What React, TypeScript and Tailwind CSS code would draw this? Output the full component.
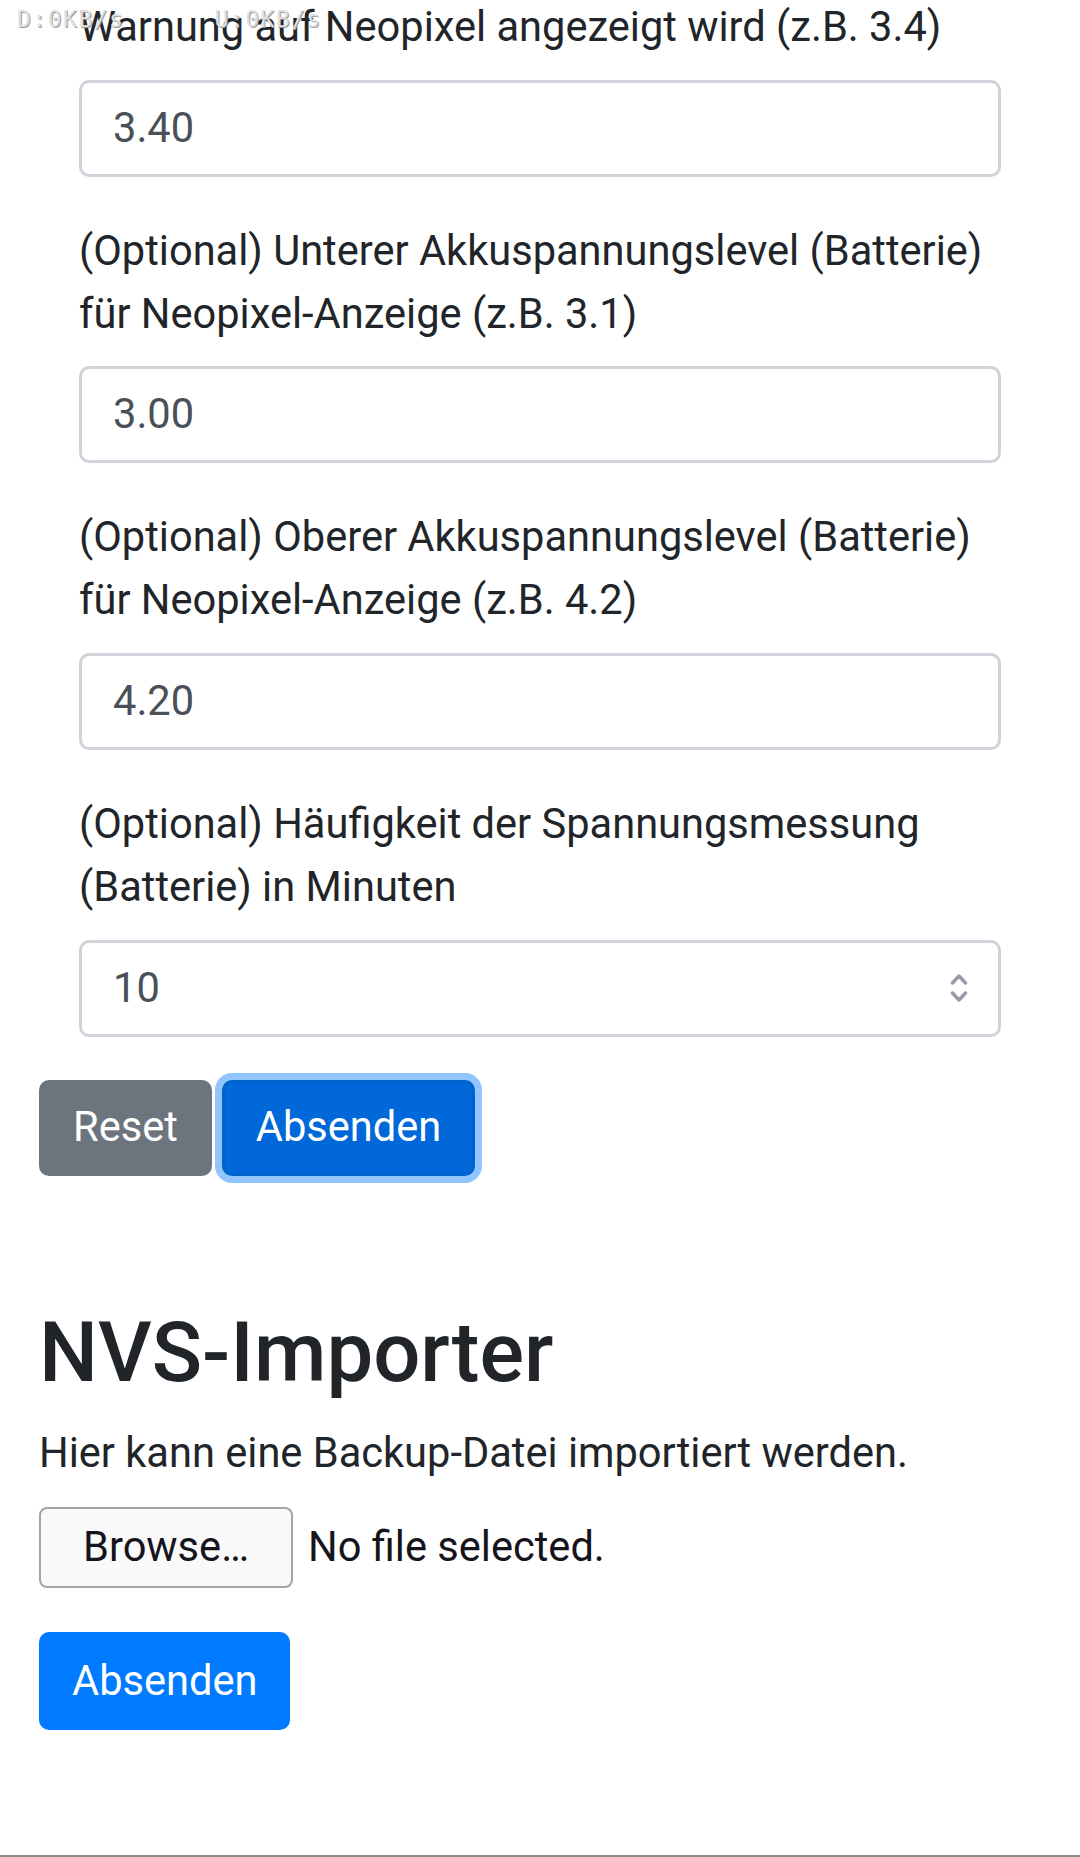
const fields = [
  { label: ["(Optional) Unterer Akkuspannungslevel (Batterie)", "für Neopixel-Anzeige (z.B. 3.1)"], value: "3.00" },
  { label: ["(Optional) Oberer Akkuspannungslevel (Batterie)", "für Neopixel-Anzeige (z.B. 4.2)"], value: "4.20" },
];

function Spinner() {
  return (
    <svg width="18" height="32" viewBox="0 0 18 32" fill="none" stroke="#9b9aa6" strokeWidth="3.5" strokeLinecap="round" strokeLinejoin="round">
      <polyline points="2.5,11 9,4 15.5,11" />
      <polyline points="2.5,21 9,28 15.5,21" />
    </svg>
  );
}

function Field({ label, value, spinner }: { label: string[]; value: string; spinner?: boolean }) {
  return (
    <div className="mb-[43px]">
      <label className="block mb-[21px]">
        {label.map((line, i) => (
          <span key={i} className="block">
            {line}
          </span>
        ))}
      </label>
      <div className="relative flex items-center h-[97px] border-[3px] border-[#ced4da] rounded-[10px] bg-white px-[31px] text-[#495057]">
        <span>{value}</span>
        {spinner && (
          <div className="absolute right-[30px] top-1/2 -translate-y-1/2 flex">
            <Spinner />
          </div>
        )}
      </div>
    </div>
  );
}

export default function App() {
  return (
    <div className="relative min-h-[1857px] bg-white text-[#212529] text-[41.6px] leading-[62.8px] font-['Roboto',sans-serif] overflow-hidden">
      {/* status overlay */}
      <div className="absolute top-[4px] left-[17px] flex gap-[90px] text-[23px] leading-[30px] tracking-[1.5px] font-['DejaVu_Sans_Mono',monospace] text-[#e0e0e0] [text-shadow:1px_1px_0_#9a9a9a] z-10">
        <span>D:0KB/s</span>
        <span>U:0KB/s</span>
      </div>

      <div className="px-[39px]">
        {/* form groups */}
        <div className="px-[40px] -mt-[4px]">
          <div className="mb-[43px]">
            <label className="block mb-[21px]">Warnung auf Neopixel angezeigt wird (z.B. 3.4)</label>
            <div className="flex items-center h-[97px] border-[3px] border-[#ced4da] rounded-[10px] bg-white px-[31px] text-[#495057]">
              <span>3.40</span>
            </div>
          </div>
          {fields.map((f) => (
            <Field key={f.value} label={f.label} value={f.value} />
          ))}
          <Field
            label={["(Optional) Häufigkeit der Spannungsmessung", "(Batterie) in Minuten"]}
            value="10"
            spinner
          />
        </div>

        <div className="flex items-center gap-[10px] mt-[1px]">
          <button className="h-[96px] px-[31px] rounded-[10px] border-[3px] border-[#6c757d] bg-[#6c757d] text-white">
            Reset
          </button>
          <button className="h-[96px] px-[31px] rounded-[10px] border-[3px] border-[#0062cc] bg-[#0068d8] text-white shadow-[0_0_0_7px_#92c5fd]">
            Absenden
          </button>
        </div>

        {/* NVS importer */}
        <h2 className="mt-[127px] mb-[19px] text-[83.2px] leading-[100px] font-medium">NVS-Importer</h2>
        <p className="mb-[23px]">Hier kann eine Backup-Datei importiert werden.</p>

        <div className="flex items-center gap-[15px]">
          <span className="flex items-center justify-center w-[254px] h-[81px] rounded-[8px] border-2 border-[#a3a3ad] bg-[#f9f9fa] text-[#15141a]">
            Browse…
          </span>
          <span className="text-[#15141a]">No file selected.</span>
        </div>

        <button className="mt-[44px] h-[98px] px-[33px] rounded-[10px] bg-[#007bff] text-white">
          Absenden
        </button>
      </div>

      <div className="absolute bottom-0 left-0 right-0 h-[2px] bg-[#8c8c8c]" />
    </div>
  );
}
